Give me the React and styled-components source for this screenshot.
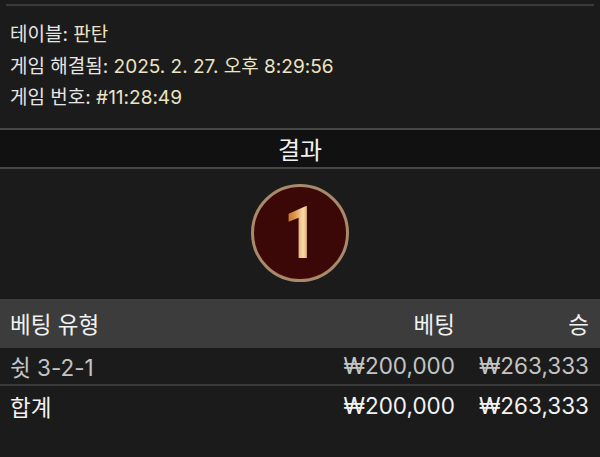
import React from "react";
import styled, { createGlobalStyle } from "styled-components";

const Global = createGlobalStyle`
  html, body { margin: 0; padding: 0; background: #1b1b1b; }
  body { font-family: "Inter", "Noto Sans CJK KR", sans-serif; -webkit-font-smoothing: antialiased; }
`;

const Page = styled.div`
  width: 600px;
  height: 457px;
  background: #1b1b1b;
  overflow: hidden;
  padding-top: 4px;
  box-sizing: border-box;
`;

const TopRule = styled.div`
  height: 2px;
  margin: 0 6px;
  background: #3a3a3a;
`;

const InfoList = styled.div`
  padding: 13px 10px 14px;
`;

const InfoLine = styled.div`
  height: 31.5px;
  line-height: 31.5px;
  font-size: 19px;
  color: #e6e6e6;
  white-space: nowrap;
`;

const Value = styled.span`
  color: #ebe5c3;
`;

const TitleBand = styled.div`
  height: 37px;
  background: #111111;
  border-top: 2px solid #474747;
  border-bottom: 2px solid #474747;
  display: flex;
  align-items: center;
  justify-content: center;
  font-size: 24px;
  color: #f2f2f2;
`;

const ResultArea = styled.div`
  height: 130px;
  display: flex;
  align-items: center;
  justify-content: center;
  padding-bottom: 2px;
  box-sizing: border-box;
`;

const Ball = styled.div`
  width: 98px;
  height: 98px;
  border-radius: 50%;
  box-sizing: border-box;
  border: 3px solid #a88a6a;
  background: #3c0707;
  display: flex;
  align-items: center;
  justify-content: center;
`;

const BallNum = styled.span`
  font-family: "Roboto", sans-serif;
  font-weight: 700;
  font-size: 72px;
  line-height: 1;
  margin-top: 2px;
  margin-left: 2px;
  background: linear-gradient(90deg, #b8681f 0%, #d98f45 30%, #f8dcaa 58%, #d08a3c 80%, #a85c1a 100%);
  -webkit-background-clip: text;
  background-clip: text;
  color: transparent;
  display: inline-block;
  transform: scaleX(0.82);
`;

const Grid = styled.div`
  display: grid;
  grid-template-columns: 1fr 130px 134px;
  align-items: center;
  padding: 0 11px 0 10px;
  height: ${(p) => p.$h}px;
  background: ${(p) => p.$bg || "transparent"};
  border-bottom: ${(p) => (p.$rule ? "2px solid #3a3a3a" : "none")};
  font-size: 22.5px;
  color: ${(p) => p.$color || "#f0f0f0"};
  white-space: nowrap;
`;

const Cell = styled.div`
  text-align: ${(p) => (p.$right ? "right" : "left")};
`;

export default function App() {
  return (
    <Page>
      <Global />
      <TopRule />
      <InfoList>
        <InfoLine>
          테이블: <Value>판탄</Value>
        </InfoLine>
        <InfoLine>
          게임 해결됨: <Value>2025. 2. 27. 오후 8:29:56</Value>
        </InfoLine>
        <InfoLine>
          게임 번호: <Value>#11:28:49</Value>
        </InfoLine>
      </InfoList>
      <TitleBand>결과</TitleBand>
      <ResultArea>
        <Ball>
          <BallNum>1</BallNum>
        </Ball>
      </ResultArea>
      <Grid $h={49} $bg="#3c3c3c" $color="#f2f2f2">
        <Cell>베팅 유형</Cell>
        <Cell $right>베팅</Cell>
        <Cell $right>승</Cell>
      </Grid>
      <Grid $h={36} $rule $color="#c4c4c4">
        <Cell>쉿 3-2-1</Cell>
        <Cell $right>₩200,000</Cell>
        <Cell $right>₩263,333</Cell>
      </Grid>
      <Grid $h={40} $color="#f2f2f2">
        <Cell>합계</Cell>
        <Cell $right>₩200,000</Cell>
        <Cell $right>₩263,333</Cell>
      </Grid>
    </Page>
  );
}
